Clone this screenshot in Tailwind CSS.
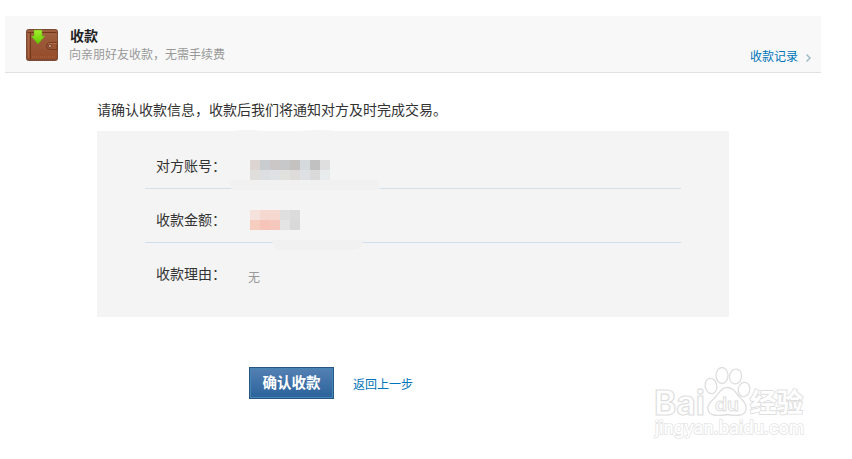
<!DOCTYPE html>
<html lang="zh-CN">
<head>
    <meta charset="UTF-8">
    <meta name="viewport" content="width=device-width, initial-scale=1.0">
    <title>收款</title>
    <script src="https://cdn.jsdelivr.net/npm/@tailwindcss/browser@4"></script>
</head>
<body class="bg-white h-[459px] overflow-hidden relative pt-4 text-[#333] font-['Noto_Sans_CJK_SC',sans-serif]">
    <header class="ml-[5px] w-[816px] h-[57px] bg-[#f8f8f8] border-b border-[#e0e0e0] flex justify-between">
        <div class="flex pl-5 pt-3">
            <svg class="w-8 h-8 mt-px ml-px" viewBox="0 0 32 32">
                <defs>
                    <linearGradient id="leather" x1="0" y1="0" x2="0" y2="1">
                        <stop offset="0" stop-color="#9f6040"/>
                        <stop offset="1" stop-color="#954c2a"/>
                    </linearGradient>
                    <linearGradient id="arrow" x1="0" y1="0" x2="0" y2="1">
                        <stop offset="0" stop-color="#a4ee2c"/>
                        <stop offset="1" stop-color="#62c800"/>
                    </linearGradient>
                </defs>
                <rect x="0" y="0" width="32" height="32" rx="3" fill="#7c4a35"/>
                <rect x="1" y="1" width="30" height="29" rx="2" fill="url(#leather)"/>
                <path d="M1.5 3.5h29M4.5 4v26" stroke="#713719" fill="none"/>
                <path d="M2.5 4v25" stroke="#b17253" stroke-width=".6"/>
                <path d="M6 5.500h24M6 28h23" stroke="#b5734f" stroke-width=".7" stroke-dasharray="1 1"/>
                <path d="M31 13.500h-7a3.500 3.500 0 0 0 0 7h7z" fill="#9a5433" stroke="#6f3820" stroke-width=".9"/>
                <path d="M31 14.500h-7a3 3 0 0 0-2 1" stroke="#b97a59" stroke-width=".7" fill="none"/>
                <circle cx="24" cy="17" r="1.600" fill="#c79a84" stroke="#6a3823" stroke-width=".7"/>
                <path d="M8 1h8v6h3l-7 8-7-8h3z" fill="url(#arrow)" stroke="#68a51a" stroke-width=".5"/>
            </svg>
            <div class="ml-3 -mt-px">
                <h1 class="text-sm leading-4 font-bold text-[#222]">收款</h1>
                <p class="-ml-px mt-px text-xs leading-5 text-[#999]">向亲朋好友收款，无需手续费</p>
            </div>
        </div>
        <a href="#" class="self-end mb-1.5 mr-2.5 flex items-center gap-2 text-xs leading-5 text-[#0075b8]">
            收款记录
            <svg class="w-[5px] h-2 mt-[3px]" viewBox="0 0 5 8" fill="none" stroke="#9dbac5" stroke-width="1.500"><path d="M.5.5 4 4 .5 7.500"/></svg>
        </a>
    </header>

    <main class="ml-[97px] w-[632px]">
        <p class="pt-[26px] h-[58px] text-sm leading-5">请确认收款信息，收款后我们将通知对方及时完成交易。</p>

        <section class="relative h-[186px] bg-[#f4f4f4] px-12">
            <div class="h-[58px] border-b border-[#d3dfe9] flex pl-[11px] pt-6">
                <span class="w-[94px] text-sm leading-5">对方账号：</span>
                <div class="mt-[5px] grid grid-cols-8 w-20 h-5">
                    <i class="bg-[#dcd5d2]"></i><i class="bg-[#c9cdcf]"></i><i class="bg-[#cbc7c6]"></i><i class="bg-[#c6c8ca]"></i><i class="bg-[#c4c2c0]"></i><i class="bg-[#d5dadd]"></i><i class="bg-[#c1c1c1]"></i><i class="bg-[#dfdfdf]"></i>
                    <i class="bg-[#e0dedd]"></i><i class="bg-[#dcdee1]"></i><i class="bg-[#e0e1e4]"></i><i class="bg-[#e1e1e0]"></i><i class="bg-[#dddcda]"></i><i class="bg-[#dfe0e4]"></i><i class="bg-[#dadada]"></i><i class="bg-[#e9ecec]"></i>
                </div>
            </div>
            <div class="h-[54px] border-b border-[#d0deee] flex pl-[11px] pt-5">
                <span class="w-[94px] text-sm leading-5">收款金额：</span>
                <div class="mt-px grid grid-cols-5 w-[50px] h-5">
                    <i class="bg-[#f5e2dc]"></i><i class="bg-[#f5d8d0]"></i><i class="bg-[#f5d8d0]"></i><i class="bg-[#dfdfe0]"></i><i class="bg-[#dbdbdb]"></i>
                    <i class="bg-[#f6cec0]"></i><i class="bg-[#f6c4b8]"></i><i class="bg-[#f6c7bc]"></i><i class="bg-[#e4e4e4]"></i><i class="bg-[#d9d9d9]"></i>
                </div>
            </div>
            <div class="flex pl-[11px] pt-5">
                <span class="w-[92px] text-sm leading-5">收款理由：</span>
                <span class="mt-1 text-xs leading-5 text-[#999]">无</span>
            </div>
            <!-- smudges over the redacted values -->
            <svg class="absolute left-0 -top-0.5 w-[632px] h-[188px]" viewBox="0 -2 632 188">
                <path d="M128 1q20-4 50 0zM194 1q27-4 54 0z" fill="#f4f4f4"/>
                <path d="M131 49h151v6l2 4H135z" fill="#f1f1f1"/>
                <path d="M174 109h93l-3 6q-2 4-8 4h-72q-5 0-7-5z" fill="#f1f1f1"/>
            </svg>
        </section>

        <div class="mt-[50px] ml-[152px] flex items-center gap-[19px]">
            <button class="w-[85px] h-8 pb-0.5 border border-[#265681] bg-linear-to-b from-[#5481b3] to-[#29629b] shadow-[inset_0_0_0_1px_#4686b4] text-white text-[14.5px] leading-7 font-bold">确认收款</button>
            <a href="#" class="mt-0.5 text-xs leading-5 text-[#0075b8]">返回上一步</a>
        </div>
    </main>

    <!-- watermark -->
    <svg class="absolute left-[640px] top-[360px] w-[180px] h-[90px]" viewBox="0 0 180 90" fill="#fff" stroke="#dedede" stroke-width="1.300">
        <ellipse cx="71" cy="26" rx="5.800" ry="7.700" transform="rotate(-12 71 26)"/>
        <ellipse cx="82" cy="15.500" rx="6" ry="8"/>
        <ellipse cx="95.500" cy="16.500" rx="6" ry="7.500" transform="rotate(10 95.500 16.500)"/>
        <ellipse cx="104" cy="29.500" rx="5.800" ry="7.200" transform="rotate(12 104 29.500)"/>
        <path d="M87 27.500c7 0 9 6 13 10s7 7 6 12c-1 6-8 7-19 5-11 2-18 1-19-5-1-5 3-8 7-12s6-10 12-10z"/>
        <g class="font-[Inter,sans-serif]">
            <text x="14" y="54.500" font-size="34" font-weight="700" textLength="51" lengthAdjust="spacingAndGlyphs" stroke-width="1.200">Bai</text>
            <text x="75" y="50.500" font-size="18" font-weight="600" textLength="24" lengthAdjust="spacingAndGlyphs" stroke-width=".9">du</text>
            <text x="15" y="74" font-size="18" font-weight="500" textLength="149" lengthAdjust="spacingAndGlyphs" paint-order="stroke" stroke="#e4e4e4" stroke-width="1.600">jingyan.baidu.com</text>
        </g>
        <text x="110" y="52" font-size="26" font-weight="700" textLength="53" lengthAdjust="spacingAndGlyphs" paint-order="stroke" stroke-width="1.800">经验</text>
    </svg>
</body>
</html>
